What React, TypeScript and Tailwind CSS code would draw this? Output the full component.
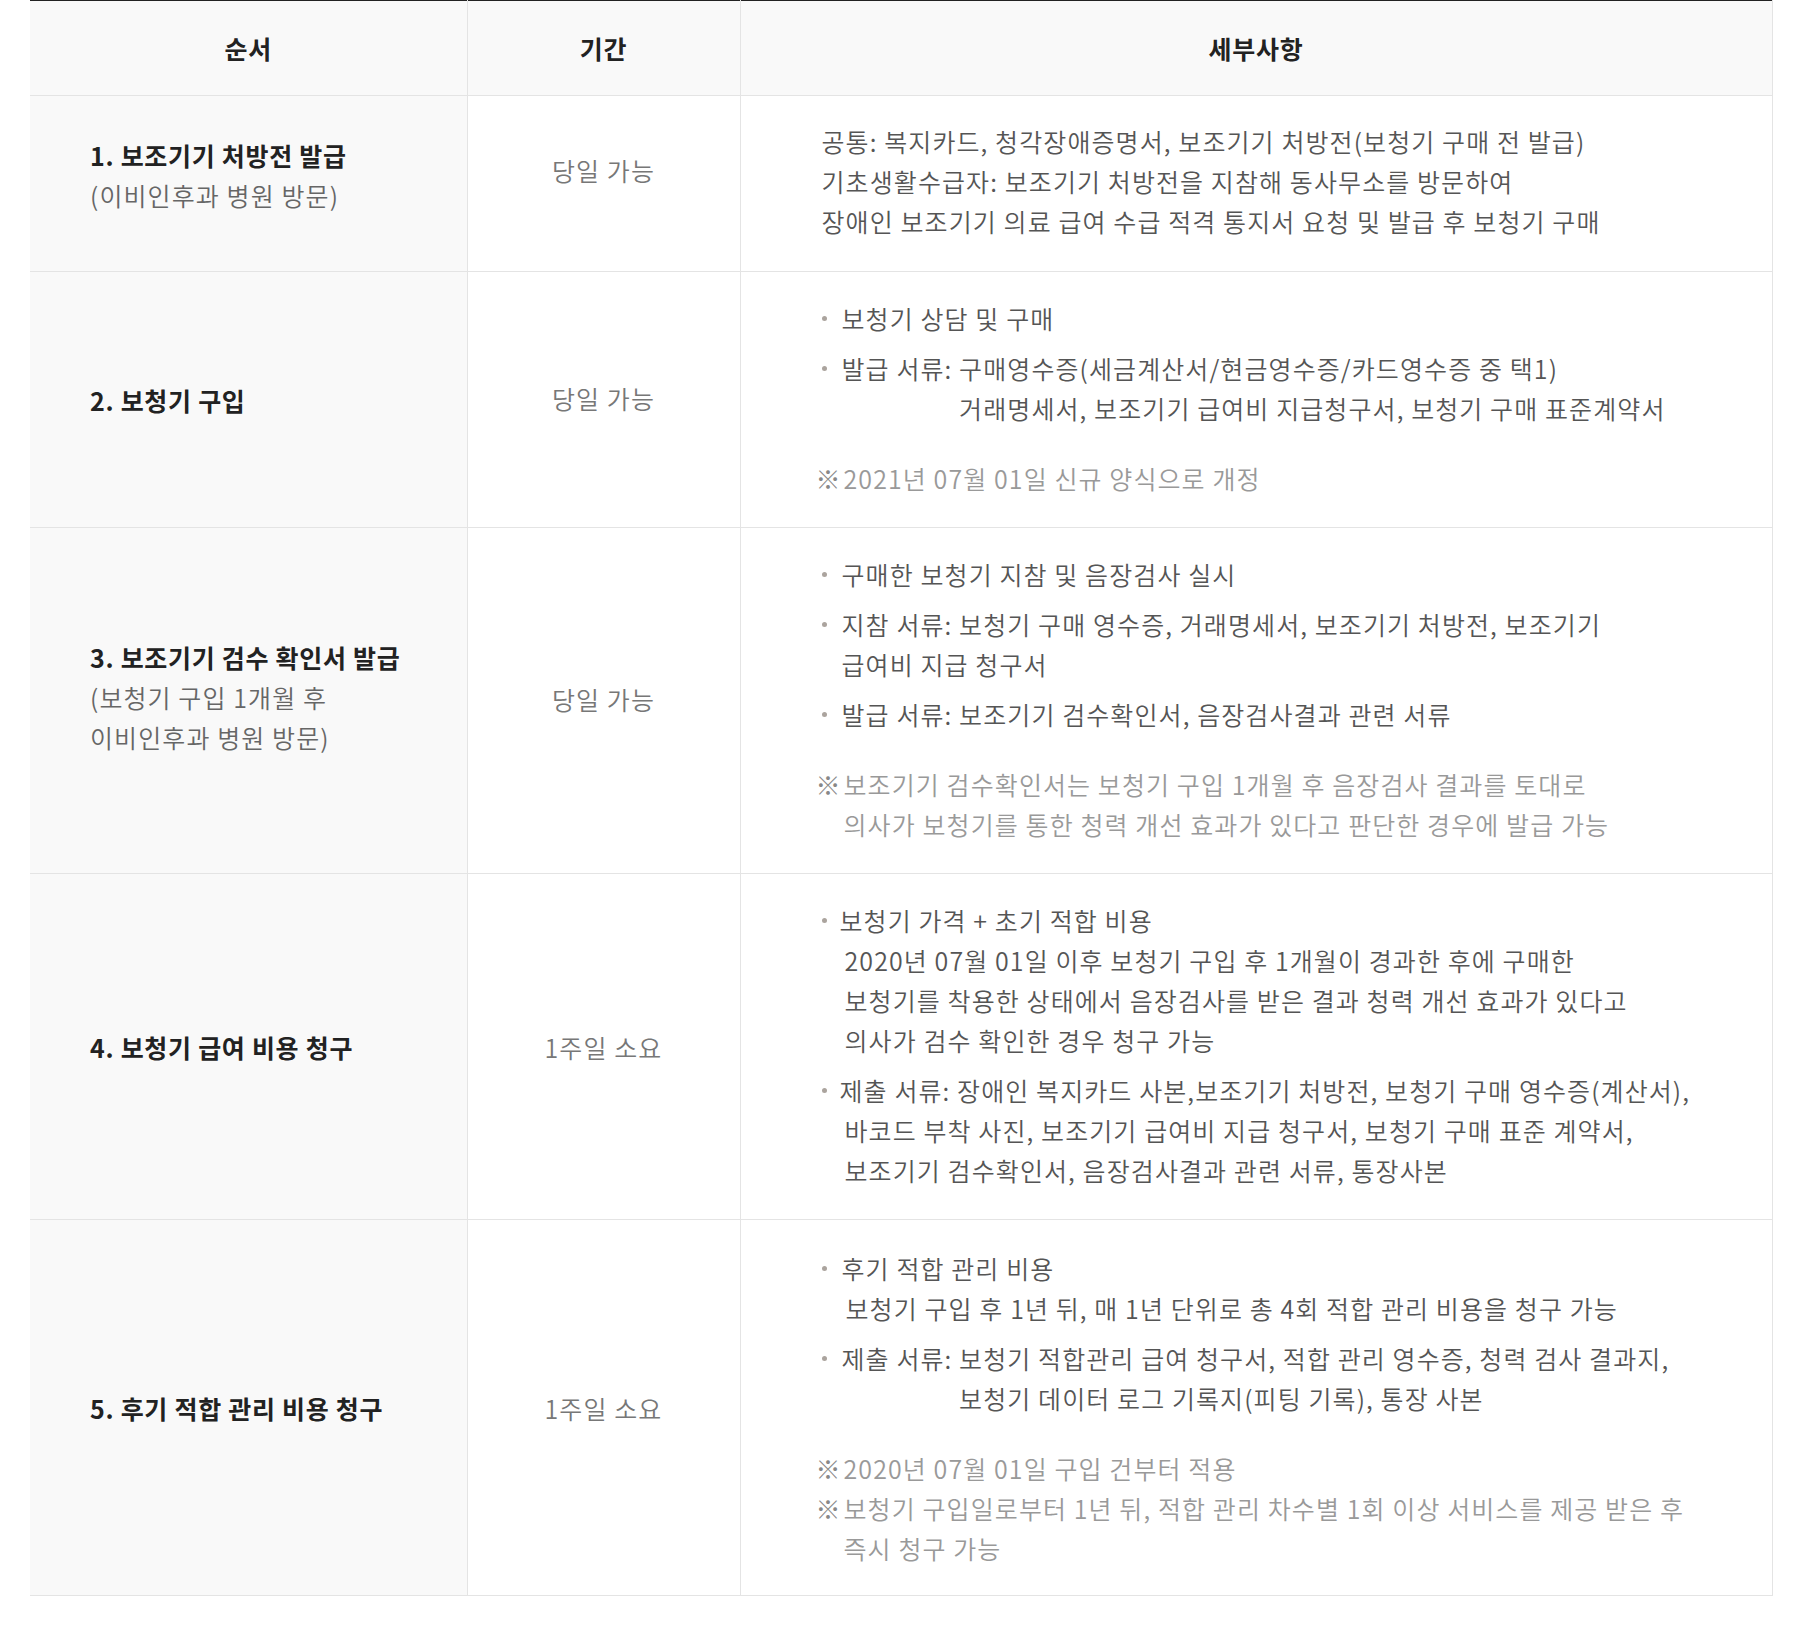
import React from 'react';

const Line = ({ children, className = '' }: { children: React.ReactNode; className?: string }) => (
  <div className={`whitespace-nowrap ${className}`}>{children}</div>
);

const Item = ({ children, first = false }: { children: React.ReactNode; first?: boolean }) => (
  <div className={`flex ${first ? '' : 'mt-[10px]'}`}>
    <div className="w-[21px] shrink-0 pl-[1px] pt-[18px]">
      <div className="h-[5px] w-[5px] rounded-full bg-[#aba49e]" />
    </div>
    <div>{children}</div>
  </div>
);

const Prefixed = ({ prefix, lines }: { prefix: string; lines: string[] }) => (
  <div className="flex">
    <span className="whitespace-pre">{prefix}</span>
    <div>
      {lines.map((l, i) => (
        <Line key={i}>{l}</Line>
      ))}
    </div>
  </div>
);

const Note = ({ lines, first = false }: { lines: string[]; first?: boolean }) => (
  <div className={`flex text-[#999] ${first ? 'mt-[30px]' : ''}`}>
    <span className="-ml-[5px] w-[28px] shrink-0 text-[#888]">※</span>
    <div>
      {lines.map((l, i) => (
        <Line key={i}>{l}</Line>
      ))}
    </div>
  </div>
);

const rows = [
  {
    title: '1. 보조기기 처방전 발급',
    sub: ['(이비인후과 병원 방문)'],
    period: '당일 가능',
    titlePad: 'pb-[18px]',
    periodPad: 'pb-[28px]',
    detailPad: 'pt-[25px] pb-[30px]',
    detail: (
      <div className="pl-[1px]">
        <Line>공통: 복지카드, 청각장애증명서, 보조기기 처방전(보청기 구매 전 발급)</Line>
        <Line>기초생활수급자: 보조기기 처방전을 지참해 동사무소를 방문하여</Line>
        <Line>장애인 보조기기 의료 급여 수급 적격 통지서 요청 및 발급 후 보청기 구매</Line>
      </div>
    ),
  },
  {
    title: '2. 보청기 구입',
    sub: [],
    period: '당일 가능',
    titlePad: '',
    periodPad: 'pb-[4px]',
    detailPad: 'pt-[26px] pb-[29px]',
    detail: (
      <div>
        <Item first>
          <Line>보청기 상담 및 구매</Line>
        </Item>
        <Item>
          <Prefixed
            prefix="발급 서류: "
            lines={['구매영수증(세금계산서/현금영수증/카드영수증 중 택1)', '거래명세서, 보조기기 급여비 지급청구서, 보청기 구매 표준계약서']}
          />
        </Item>
        <Note first lines={['2021년 07월 01일 신규 양식으로 개정']} />
      </div>
    ),
  },
  {
    title: '3. 보조기기 검수 확인서 발급',
    sub: ['(보청기 구입 1개월 후', '이비인후과 병원 방문)'],
    period: '당일 가능',
    titlePad: 'pb-[8px]',
    periodPad: 'pb-[4px]',
    detailPad: 'pt-[26px] pb-[29px]',
    detail: (
      <div>
        <Item first>
          <Line>구매한 보청기 지참 및 음장검사 실시</Line>
        </Item>
        <Item>
          <Line>지참 서류: 보청기 구매 영수증, 거래명세서, 보조기기 처방전, 보조기기</Line>
          <Line>급여비 지급 청구서</Line>
        </Item>
        <Item>
          <Line>발급 서류: 보조기기 검수확인서, 음장검사결과 관련 서류</Line>
        </Item>
        <Note
          first
          lines={['보조기기 검수확인서는 보청기 구입 1개월 후 음장검사 결과를 토대로', '의사가 보청기를 통한 청력 개선 효과가 있다고 판단한 경우에 발급 가능']}
        />
      </div>
    ),
  },
  {
    title: '4. 보청기 급여 비용 청구',
    sub: [],
    period: '1주일 소요',
    titlePad: '',
    periodPad: '',
    detailPad: 'pt-[26px] pb-[29px]',
    detail: (
      <div>
        <Item first>
          <Line className="-ml-[2px]">보청기 가격 + 초기 적합 비용</Line>
          <Line className="pl-[3px]">2020년 07월 01일 이후 보청기 구입 후 1개월이 경과한 후에 구매한</Line>
          <Line className="pl-[3px]">보청기를 착용한 상태에서 음장검사를 받은 결과 청력 개선 효과가 있다고</Line>
          <Line className="pl-[3px]">의사가 검수 확인한 경우 청구 가능</Line>
        </Item>
        <Item>
          <Line className="-ml-[2px]">제출 서류: 장애인 복지카드 사본,보조기기 처방전, 보청기 구매 영수증(계산서),</Line>
          <Line className="pl-[3px]">바코드 부착 사진, 보조기기 급여비 지급 청구서, 보청기 구매 표준 계약서,</Line>
          <Line className="pl-[3px]">보조기기 검수확인서, 음장검사결과 관련 서류, 통장사본</Line>
        </Item>
      </div>
    ),
  },
  {
    title: '5. 후기 적합 관리 비용 청구',
    sub: [],
    period: '1주일 소요',
    titlePad: '',
    periodPad: '',
    detailPad: 'pt-[28px] pb-[27px]',
    detail: (
      <div>
        <Item first>
          <Line>후기 적합 관리 비용</Line>
          <Line className="pl-[4px]">보청기 구입 후 1년 뒤, 매 1년 단위로 총 4회 적합 관리 비용을 청구 가능</Line>
        </Item>
        <Item>
          <Prefixed
            prefix="제출 서류: "
            lines={['보청기 적합관리 급여 청구서, 적합 관리 영수증, 청력 검사 결과지,', '보청기 데이터 로그 기록지(피팅 기록), 통장 사본']}
          />
        </Item>
        <Note first lines={['2020년 07월 01일 구입 건부터 적용']} />
        <Note lines={['보청기 구입일로부터 1년 뒤, 적합 관리 차수별 1회 이상 서비스를 제공 받은 후', '즉시 청구 가능']} />
      </div>
    ),
  },
];

const App = () => {
  return (
    <div className="min-h-[1629px] w-[1805px] bg-white pl-[30px] font-['Noto_Sans_CJK_KR','Noto_Sans',sans-serif] text-[25px] font-[350] leading-[40px] tracking-[1.1px] text-[#555]">
      <table className="w-[1742px] table-fixed border-collapse border-t border-[#222]">
        <colgroup>
          <col className="w-[437px]" />
          <col className="w-[273px]" />
          <col className="w-[1032px]" />
        </colgroup>
        <thead>
          <tr className="h-[95px] bg-[#f9f9f9] tracking-[0.7px] text-[#222]">
            <th className="border-b border-[#e4e4e4] font-bold">순서</th>
            <th className="border-b border-l border-[#e4e4e4] font-bold">기간</th>
            <th className="border-b border-l border-r border-[#e4e4e4] font-bold">세부사항</th>
          </tr>
        </thead>
        <tbody>
          {rows.map((row, i) => (
            <tr key={i}>
              <td className={`border-b border-[#e4e4e4] bg-[#f9f9f9] pl-[60px] align-middle ${row.titlePad}`}>
                <div className="font-bold tracking-[0.7px] text-[#222]">{row.title}</div>
                {row.sub.map((s, j) => (
                  <div key={j} className="text-[#666]">
                    {s}
                  </div>
                ))}
              </td>
              <td className={`border-b border-l border-[#e4e4e4] text-center align-middle text-[#777] ${row.periodPad}`}>
                {row.period}
              </td>
              <td className={`border-b border-l border-r border-[#e4e4e4] pl-[80px] align-middle ${row.detailPad}`}>
                {row.detail}
              </td>
            </tr>
          ))}
        </tbody>
      </table>
    </div>
  );
};

export default App;
